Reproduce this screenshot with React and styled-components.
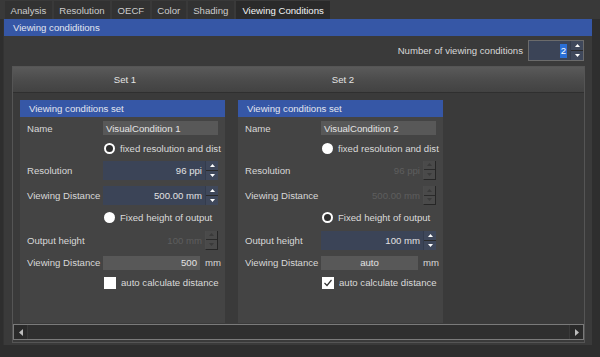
import React from "react";
import styled, { createGlobalStyle } from "styled-components";

const GlobalStyle = createGlobalStyle`
  html, body { margin: 0; padding: 0; background: #2d2d2d; }
  body {
    font-family: "Liberation Sans", Arial, sans-serif;
    font-size: 9.6px;
    color: #dadada;
  }
  * { box-sizing: border-box; }
`;

const Window = styled.div`
  width: 600px;
  height: 357px;
  display: flex;
  flex-direction: column;
  background: #2e2e2e;
  overflow: hidden;
`;

const TabBar = styled.div`
  height: 19px;
  display: flex;
  align-items: stretch;
  gap: 2px;
  padding: 1px 0 0 5px;
  background: #393939;
`;

const Tab = styled.div`
  display: flex;
  align-items: center;
  padding: 0 ${(p) => (p.$active ? 6.5 : 5.5)}px;
  background: ${(p) => (p.$active ? "#2a2a2a" : "#323232")};
  color: ${(p) => (p.$active ? "#f2f2f2" : "#cccccc")};
`;

const Frame = styled.div`
  flex: 1;
  display: flex;
  flex-direction: column;
  margin: 0 8px 12px 3px;
  background: #3a3a3a;
  border-left: 1px solid #333;
`;

const SectionHeader = styled.div`
  height: 17px;
  display: flex;
  align-items: center;
  padding-left: 9px;
  background: #3657a6;
  color: #e2e6f0;
`;

const CountRow = styled.div`
  display: flex;
  justify-content: flex-end;
  align-items: center;
  gap: 5px;
  margin-top: 4px;
  padding-right: 8px;
  height: 21px;
`;

const TopSpin = styled.div`
  width: 56px;
  height: 21px;
  display: flex;
  border: 1px solid #6b6b6b;
  background: #3b4457;
`;

const TopSpinText = styled.div`
  flex: 1;
  display: flex;
  justify-content: flex-end;
  align-items: center;
  padding-right: 3px;
`;

const Selected = styled.span`
  background: #2b6fd6;
  color: #ffffff;
  padding: 1px 1px;
  line-height: 12px;
`;

const SetsGroup = styled.div`
  flex: 1;
  display: flex;
  flex-direction: column;
  margin: 5px 7px 2px 8px;
  border: 1px solid #555;
  background: #3a3a3a;
`;

const SetsHeader = styled.div`
  height: 26px;
  display: flex;
  padding-left: 3px;
  background: linear-gradient(#5a5a5a, #4c4c4c 50%, #424242);
  border-bottom: 1px solid #2f2f2f;
`;

const HeaderCell = styled.div`
  width: 218px;
  display: flex;
  align-items: center;
  justify-content: center;
  color: #e4e4e4;
`;

const SetsBody = styled.div`
  flex: 1;
  display: flex;
  gap: 13px;
  padding: 7px 0 0 7px;
  min-height: 0;
`;

const Card = styled.div`
  width: 205px;
  background: #444444;
  display: flex;
  flex-direction: column;
`;

const CardHeader = styled.div`
  height: 17px;
  display: flex;
  align-items: center;
  padding-left: 9px;
  background: #3657a6;
  color: #e2e6f0;
`;

const Row = styled.div`
  height: ${(p) => p.$h}px;
  display: grid;
  grid-template-columns: 76px 1fr;
  align-items: center;
  padding: 0 7px 0 7px;
`;

const Label = styled.div`
  color: #d8d8d8;
  white-space: nowrap;
`;

const TextBox = styled.div`
  height: 14px;
  width: ${(p) => p.$w || 115}px;
  background: #585858;
  color: #e4e4e4;
  display: flex;
  align-items: center;
  justify-content: ${(p) => p.$align || "flex-start"};
  padding: 0 3px;
  white-space: nowrap;
  overflow: hidden;
`;

const FieldWithUnit = styled.div`
  display: flex;
  align-items: center;
  gap: 5px;
`;

const Unit = styled.span`
  color: #d8d8d8;
`;

const Spin = styled.div`
  width: 115px;
  height: 19px;
  display: flex;
  background: ${(p) => (p.$disabled ? "transparent" : "#3b4457")};
`;

const SpinText = styled.div`
  flex: 1;
  display: flex;
  align-items: center;
  justify-content: flex-end;
  padding-right: 3px;
  color: ${(p) => (p.$disabled ? "#5e5e5e" : "#e2e2e2")};
`;

const SpinButtons = styled.div`
  width: 13px;
  display: flex;
  flex-direction: column;
  border-left: 1px solid ${(p) => (p.$disabled ? "#4c4c4c" : "#343c4d")};
  ${(p) =>
    p.$disabled
      ? "border-right: 1px solid #262626; border-bottom: 1px solid #262626; background: #4a4a4a;"
      : "background: #3f485b;"}
`;

const SpinBtn = styled.div`
  flex: 1;
  display: flex;
  align-items: center;
  justify-content: center;
  & + & {
    border-top: 1px solid ${(p) => (p.$disabled ? "#2a2a2a" : "#343c4d")};
  }
`;

const OptionLine = styled.div`
  grid-column: 2;
  display: flex;
  align-items: center;
  gap: 5px;
  padding-left: 1px;
  white-space: nowrap;
  color: #dadada;
`;

const Radio = styled.span`
  width: 11px;
  height: 11px;
  border-radius: 50%;
  flex: none;
  background: ${(p) => (p.$checked ? "#ffffff" : "#2f2f2f")};
  border: ${(p) => (p.$checked ? "none" : "2px solid #ffffff")};
`;

const Check = styled.span`
  width: 12px;
  height: 12px;
  flex: none;
  background: #ffffff;
  display: flex;
  align-items: center;
  justify-content: center;
`;

const HScroll = styled.div`
  height: 16px;
  margin: 1px 0 2px 0;
  display: flex;
  border: 1px solid #7a7a7a;
  background: #2e2e2e;
`;

const ScrollBtn = styled.div`
  width: 14px;
  display: flex;
  align-items: center;
  justify-content: center;
  background: #2a2a2a;
  ${(p) => (p.$right ? "border-left: 1px solid #3a3a3a;" : "border-right: 1px solid #3a3a3a;")}
`;

const ScrollTrack = styled.div`
  flex: 1;
  background: #2f2f2f;
`;

const Arrow = ({ dir, color = "#ffffff" }) => (
  <svg width="5" height="3" viewBox="0 0 5 3">
    {dir === "up" ? (
      <polygon points="0,3 2.5,0 5,3" fill={color} />
    ) : (
      <polygon points="0,0 5,0 2.5,3" fill={color} />
    )}
  </svg>
);

const SideArrow = ({ dir }) => (
  <svg width="4" height="7" viewBox="0 0 4 7">
    {dir === "left" ? (
      <polygon points="4,0 0,3.5 4,7" fill="#bdbdbd" />
    ) : (
      <polygon points="0,0 4,3.5 0,7" fill="#bdbdbd" />
    )}
  </svg>
);

const SpinBox = ({ value, disabled }) => (
  <Spin $disabled={disabled}>
    <SpinText $disabled={disabled}>{value}</SpinText>
    <SpinButtons $disabled={disabled}>
      <SpinBtn $disabled={disabled}>
        <Arrow dir="up" color={disabled ? "#3a3a3a" : "#ffffff"} />
      </SpinBtn>
      <SpinBtn $disabled={disabled}>
        <Arrow dir="down" color={disabled ? "#3a3a3a" : "#ffffff"} />
      </SpinBtn>
    </SpinButtons>
  </Spin>
);

const CheckMark = () => (
  <svg width="10" height="10" viewBox="0 0 10 10">
    <polyline points="1.5,5 4,7.5 8.5,2" fill="none" stroke="#333" strokeWidth="1.2" />
  </svg>
);

const sets = [
  {
    title: "Set 1",
    name: "VisualCondition 1",
    fixedRes: false,
    resolution: "96 ppi",
    distance: "500.00 mm",
    height: "100 mm",
    viewDist: "500",
    auto: false,
  },
  {
    title: "Set 2",
    name: "VisualCondition 2",
    fixedRes: true,
    resolution: "96 ppi",
    distance: "500.00 mm",
    height: "100 mm",
    viewDist: "auto",
    auto: true,
  },
];

const SetCard = ({ s }) => (
  <Card>
    <CardHeader>Viewing conditions set</CardHeader>
    <Row $h={22}>
      <Label>Name</Label>
      <TextBox>{s.name}</TextBox>
    </Row>
    <Row $h={18}>
      <OptionLine>
        <Radio $checked={s.fixedRes} />
        fixed resolution and dist
      </OptionLine>
    </Row>
    <Row $h={26}>
      <Label>Resolution</Label>
      <SpinBox value={s.resolution} disabled={s.fixedRes} />
    </Row>
    <Row $h={25}>
      <Label>Viewing Distance</Label>
      <SpinBox value={s.distance} disabled={s.fixedRes} />
    </Row>
    <Row $h={18}>
      <OptionLine>
        <Radio $checked={!s.fixedRes} />
        Fixed height of output
      </OptionLine>
    </Row>
    <Row $h={28}>
      <Label>Output height</Label>
      <SpinBox value={s.height} disabled={!s.fixedRes} />
    </Row>
    <Row $h={17}>
      <Label>Viewing Distance</Label>
      <FieldWithUnit>
        <TextBox $w={97} $align={s.auto ? "center" : "flex-end"}>
          {s.viewDist}
        </TextBox>
        <Unit>mm</Unit>
      </FieldWithUnit>
    </Row>
    <Row $h={23}>
      <OptionLine>
        <Check>{s.auto && <CheckMark />}</Check>
        auto calculate distance
      </OptionLine>
    </Row>
  </Card>
);

const tabs = ["Analysis", "Resolution", "OECF", "Color", "Shading", "Viewing Conditions"];

export default function App() {
  return (
    <>
      <GlobalStyle />
      <Window>
        <TabBar>
          {tabs.map((t) => (
            <Tab key={t} $active={t === "Viewing Conditions"}>
              {t}
            </Tab>
          ))}
        </TabBar>
        <Frame>
          <SectionHeader>Viewing condiditions</SectionHeader>
          <CountRow>
            <Label>Number of viewing conditions</Label>
            <TopSpin>
              <TopSpinText>
                <Selected>2</Selected>
              </TopSpinText>
              <SpinButtons>
                <SpinBtn>
                  <Arrow dir="up" />
                </SpinBtn>
                <SpinBtn>
                  <Arrow dir="down" />
                </SpinBtn>
              </SpinButtons>
            </TopSpin>
          </CountRow>
          <SetsGroup>
            <SetsHeader>
              {sets.map((s) => (
                <HeaderCell key={s.title}>{s.title}</HeaderCell>
              ))}
            </SetsHeader>
            <SetsBody>
              {sets.map((s) => (
                <SetCard key={s.title} s={s} />
              ))}
            </SetsBody>
            <HScroll>
              <ScrollBtn>
                <SideArrow dir="left" />
              </ScrollBtn>
              <ScrollTrack />
              <ScrollBtn $right>
                <SideArrow dir="right" />
              </ScrollBtn>
            </HScroll>
          </SetsGroup>
        </Frame>
      </Window>
    </>
  );
}
